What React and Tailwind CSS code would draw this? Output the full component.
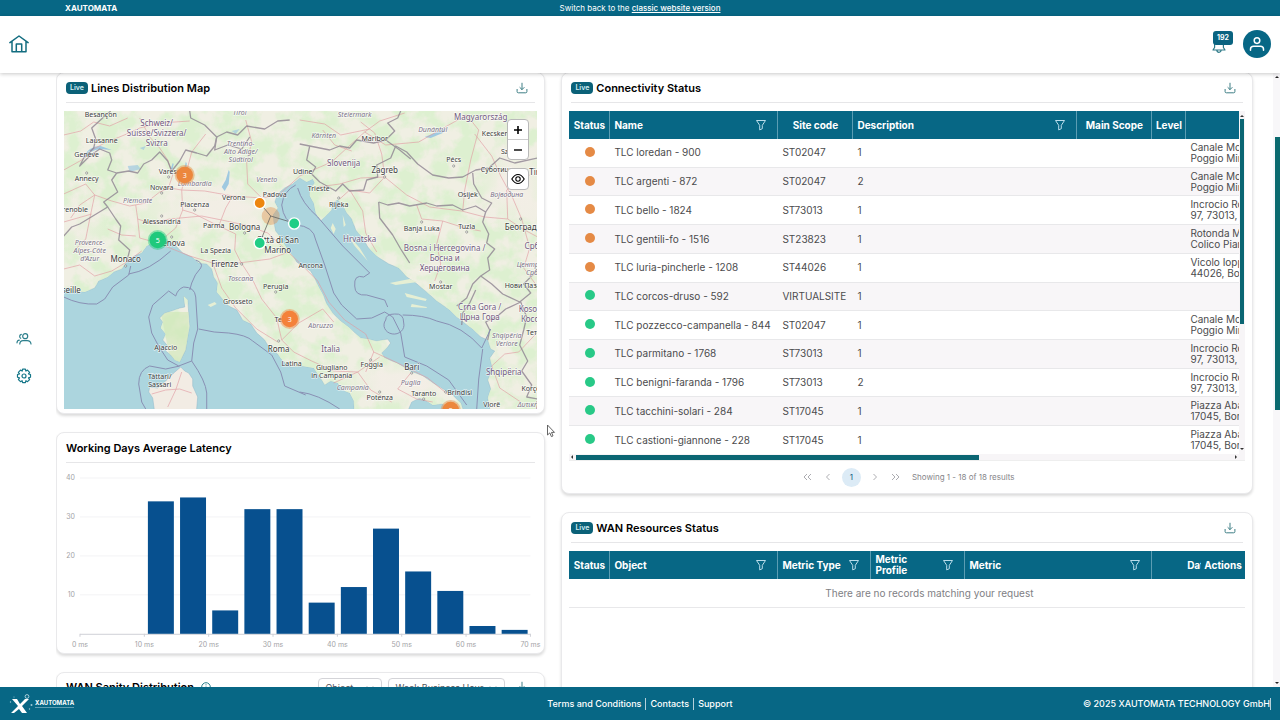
import React from "react";
import clsx from "clsx";

const ORANGE = "#e58a45";

const lines = [
  ["TLC loredan - 900", "ST02047", "1", "warn", "Canale Monti", "Poggio Mirteto"],
  ["TLC argenti - 872", "ST02047", "2", "warn", "Canale Monti", "Poggio Mirteto"],
  ["TLC bello - 1824", "ST73013", "1", "warn", "Incrocio Rocca", "97, 73013, Galatina"],
  ["TLC gentili-fo - 1516", "ST23823", "1", "warn", "Rotonda Mario", "Colico Piano"],
  ["TLC luria-pincherle - 1208", "ST44026", "1", "warn", "Vicolo Ioppi", "44026, Bosco"],
  ["TLC corcos-druso - 592", "VIRTUALSITE", "1", "ok", "", ""],
  ["TLC pozzecco-campanella - 844", "ST02047", "1", "ok", "Canale Monti", "Poggio Mirteto"],
  ["TLC parmitano - 1768", "ST73013", "1", "ok", "Incrocio Rocca", "97, 73013, Galatina"],
  ["TLC benigni-faranda - 1796", "ST73013", "2", "ok", "Incrocio Rocca", "97, 73013, Galatina"],
  ["TLC tacchini-solari - 284", "ST17045", "1", "ok", "Piazza Abate", "17045, Bormida"],
  ["TLC castioni-giannone - 228", "ST17045", "1", "ok", "Piazza Abate", "17045, Bormida"],
];

const latency = [34, 35, 6, 32, 32, 8, 12, 27, 16, 11, 2, 1];

function FilterIcon() {
  return (
    <svg viewBox="0 0 12 12" className="size-3 shrink-0" fill="none" stroke="#b9dcea" strokeWidth="1" strokeLinejoin="round">
      <path d="M1.5 1.5h9L7.3 6.3v3.4l-2.6 1.2V6.3z" />
    </svg>
  );
}

function DownloadIcon() {
  return (
    <svg viewBox="0 0 12 12" className="size-3" fill="none" stroke="#3f7f86" strokeWidth="1" strokeLinecap="round" strokeLinejoin="round">
      <path d="M6 1.2v6.3M3.9 5.5 6 7.6l2.1-2.1M1.1 7.4v2.2q0 1.2 1.2 1.2h7.4q1.2 0 1.2-1.2V7.4" />
    </svg>
  );
}

function Card({ title, live, download, extra, className, children }) {
  return (
    <section className={clsx("rounded-lg border border-[#e9e9eb] bg-white px-[7px] pb-1 shadow-[0_2px_3px_rgba(0,0,0,0.14)]", className)}>
      <header className="mx-0.5 flex h-[30px] items-center gap-[3px] border-b border-[#e6e6e8] pr-[7px]">
        {live && <span className="rounded bg-[#0b6178] px-1 text-[7px] leading-3 font-semibold text-[#d5eef3]">Live</span>}
        <h2 className="text-[11px] leading-4 font-semibold whitespace-nowrap text-black">{title}</h2>
        {extra}
        {download && (
          <button type="button" aria-label={"Download " + title} className={extra ? "ml-2" : "ml-auto"}>
            <DownloadIcon />
          </button>
        )}
      </header>
      {children}
    </section>
  );
}

const coast =
  "M40 289 64 289 69 288 75 291 85 292 95 288 99 281 108 277 114 272 122 269 127 262 135 256 142 253 147 246 157 241 166 239 175 245 183 253 192 257 199 263 207 264 212 269 214 277 218 283 217 292 222 298 229 306 237 310 243 320 251 324 257 333 265 340 269 347 278 354 283 361 291 367 302 366 314 368 320 377 325 385 331 381 338 383 345 391 350 393 354 401 355 420 408 420 409 409 412 402 420 398 427 401 433 405 443 404 450 411 464 411 461 403 452 394 445 390 433 383 423 376 412 372 397 363 385 358 382 353 388 347 391 343 388 339 377 341 368 339 361 338 350 328 341 321 333 313 327 304 324 296 319 287 315 278 311 271 303 266 297 262 293 256 289 251 284 243 280 236 276 231 274 222 273 215 278 208 275 202 278 194 285 188 293 184 300 178 307 182 313 179 315 183 310 189 310 196 314 203 316 213 321 221 327 215 332 210 333 203 338 200 343 205 347 213 352 219 356 230 363 238 368 247 378 257 389 264 399 268 407 277 416 283 428 293 437 301 450 310 457 317 466 324 473 329 481 337 488 340 491 349 495 351 490 358 493 369 488 380 491 389 488 398 492 420 560 420 560 90 40 90Z";
const corsica = "M184 296 188 300 189 312 190 326 188 337 186 350 180 362 175 360 171 355 166 351 168 346 163 340 166 334 161 328 163 322 160 318 165 313 172 311 180 308 185 307Z";
const sardinia = "M181 367 185 371 189 373 193 379 193 386 198 397 196 420 156 420 153 398 149 392 150 387 158 388 166 381 174 373Z";

const borders = [
  "M64 236 72 227 80 224 108 207 104 202 118 192 112 180 117 173 108 170 112 160 110 153 100 149 90 156 80 166 84 158 94 148 96 139 92 128 104 117 111 111",
  "M108 207 116 219 121 226 119 240 130 250 127 262",
  "M117 173 129 171 138 173 144 164 152 160 160 152 168 161 172 171 180 161 186 150 197 153 207 156 215 146 217 137 205 125 191 118 190 111",
  "M217 137 227 132 238 135 247 126 265 129 278 121 290 120",
  "M217 137 215 150 228 145 242 149 250 137",
  "M300 144 310 146 330 150 340 146 350 148 357 140 374 143 386 140 395 131 388 123 398 118 401 111",
  "M310 146 307 160 316 167 312 174 320 182 336 191 343 184 350 191 364 190 367 180 378 177 377 165 391 158 396 146 407 152 418 164 433 175 449 178 463 177 476 170 489 168 500 158 515 163 538 158",
  "M386 140 400 150 411 159",
  "M379 202 388 205 399 203 410 206 427 203 437 206 453 205 463 210 476 206 486 212 492 203 482 198 474 184 473 173",
  "M379 202 380 218 393 235 401 249 410 263",
  "M486 212 483 222 489 234 487 243 495 249 488 258 490 270 481 276 473 284 467 298 457 306",
  "M481 276 492 284 503 294 520 302 531 293 524 284 538 270",
  "M462 325 463 313 470 303 476 290",
  "M488 340 490 330 486 322 499 315 506 309 521 302",
  "M521 302 527 317 524 330 520 345 528 361 522 371 532 385 527 397 538 399",
];

const maritime = [
  "M64 297q16 8 33 7l8-5 8-12 16-12 2-9M129 274q20-3 42-23M196 260q8 3 5 8-6 6-9 15l-2 7",
  "M176 296q2-7 8-9 11 0 12 10l2 32-4 14-2 18-13 5-11-6q-10-14-16-27l-3-16 4-12 16-14z",
  "M199 329q16 4 30 4 18 2 24 8l19 14 9 17 4 14 21 9",
  "M192 361q14 20 15 32v16M180 366l-14 3-16-3q-11 4-11 18l3 18 4 7",
  "M296 185q-12 6-14 20 2 17 14 20 18 1 20 15l9 25 9 28 8 12 15 14 15-1 13-6 8 5 8 16 4 24 22 9 22 14 18 25",
  "M298 188q4 15 20 29l25 29 27 27-6 4q-10-3-9 9 0 10 12 9l18 5 3 7",
  "M386 320a10 9 0 1 0 18 3q0-10-9-9-9 0-9 6zM403 315q21 0 34 6 26 5 45 27l9-19M483 349q-5 30-6 60",
  "M300 392q18 2 40 17",
];

const roads = [
  "M64 170 82 160 92 150 105 143 127 134 140 128 160 123 190 121",
  "M64 194 86 184 95 195 91 214 86 239 75 250M95 195 112 201 130 206 146 203 160 192 170 188 182 190 205 191 233 196 262 198 279 195 300 176 318 168 332 162 345 150 365 132 380 121 405 113",
  "M136 205 138 219 150 223 170 219 202 216 222 220 245 225 268 233 282 246 300 263 318 281 329 302 345 320 366 334 374 352 398 363 428 378 449 395",
  "M182 190 183 210 193 213 219 226 236 234 235 250 241 262 254 282 262 299 277 318 282 340 294 352 312 361 334 371 358 372 380 357",
  "M138 219 140 238 158 243 176 228 183 210M158 243 190 256 213 263 239 263 270 259 289 252",
  "M213 263 222 288 236 308 257 329 278 342M282 340 299 323 323 309 334 322",
  "M168 190 173 175 168 160 160 148 150 137 140 118M182 190 187 171 192 152 206 134",
  "M262 198 248 184 247 163 252 142 246 120M219 226 226 208 233 196",
  "M64 135 81 131 94 122 110 126 128 118M95 195 80 205 71 218M64 269 80 265 95 276 112 271 127 262 142 251",
  "M318 187 340 184 361 178 385 177 407 195 430 207 462 211 485 217 508 219 523 229 538 237",
  "M385 177 382 154 375 133 361 122M385 177 370 193 350 190 340 199M350 190 363 211 366 233 377 252",
  "M417 205 422 219 443 221 465 228 481 231M365 132 386 145 419 142 440 130 467 115 479 130 471 160 465 190 463 211",
  "M522 219 513 198 501 176 492 156 475 134M522 219 530 248 524 268 538 287M443 221 437 244 441 264 435 281",
  "M492 366 505 354 519 352 538 332M492 366 500 388 521 402M508 219 507 190 530 175",
  "M334 383 358 372 371 390 392 402M411 373 398 389 417 399 433 402M374 352 366 372M152 394 166 390 180 389 192 393M182 372 176 390 168 407",
  "M300 120 325 124 341 135 370 129M323 130 335 145 352 151M92 214 64 222M108 229 122 235 136 236",
];

// text, x, y, size, kind (c city, k country, r region)
const labels = [
  ["Besançon", 101, 117, 7, "c"], ["Schweiz/", 157, 126, 8, "k"], ["Suisse/Svizzera/", 157, 136, 8, "k"], ["Svizra", 157, 146, 8, "k"],
  ["Lausanne", 102, 143, 7, "c"], ["Genève", 87, 157, 7, "c"], ["Annecy", 87, 181, 7, "c"], ["Grenoble", 73, 212, 7, "c"],
  ["Trentino-", 241, 146, 7, "r"], ["Alto Adige/", 241, 154, 7, "r"], ["Südtirol", 241, 162, 7, "r"], ["Tirol", 240, 115, 7, "r"],
  ["Varese", 170, 174, 7, "c"], ["Lombardia", 195, 186, 7, "r"], ["Novara", 162, 190, 7, "c"], ["Veneto", 267, 182, 7, "r"],
  ["Udine", 303, 174, 7, "c"], ["Padova", 275, 197, 7, "c"], ["Verona", 234, 200, 7, "c"], ["Piemonte", 138, 203, 7, "r"],
  ["Piacenza", 195, 207, 7, "c"], ["Alessandria", 162, 224, 7, "c"], ["Parma", 214, 228, 7, "c"], ["Bologna", 245, 230, 8, "c"],
  ["Provence-", 90, 245, 7, "r"], ["Alpes-Côte", 90, 253, 7, "r"], ["d'Azur", 90, 261, 7, "r"], ["Genova", 171, 246, 8, "c"],
  ["Città di San", 278, 243, 8, "c"], ["Marino", 278, 253, 8, "c"], ["La Spezia", 216, 253, 7, "c"], ["Monaco", 126, 262, 8, "c"],
  ["Firenze", 225, 267, 8, "c"], ["Toscana", 241, 281, 7, "r"], ["Perugia", 276, 289, 7, "c"], ["Marseille", 64, 293, 8, "c"],
  ["Grosseto", 238, 304, 7, "c"], ["Ancona", 311, 268, 7, "c"], ["Terni", 283, 322, 7, "c"], ["Abruzzo", 321, 328, 7, "r"],
  ["Ajaccio", 166, 350, 7, "c"], ["Roma", 279, 352, 8, "c"], ["Italia", 331, 352, 8, "k"], ["Latina", 292, 366, 7, "c"],
  ["Tàttari/", 160, 379, 7, "c"], ["Sassari", 160, 387, 7, "c"], ["Giugliano", 332, 370, 7, "c"], ["in Campania", 332, 378, 7, "c"],
  ["Foggia", 372, 367, 7, "c"], ["Bari", 412, 370, 8, "c"], ["Campania", 353, 390, 7, "r"], ["Puglia", 411, 385, 7, "r"],
  ["Potenza", 380, 400, 7, "c"], ["Taranto", 424, 396, 7, "c"], ["Brindisi", 460, 395, 7, "c"], ["Steiermark", 355, 117, 7, "r"],
  ["Kärnten", 324, 138, 7, "r"], ["Maribor", 375, 141, 7, "c"], ["Magyarország", 481, 120, 8, "k"], ["Dunántúl", 433, 132, 7, "r"],
  ["Kecskemét", 500, 136, 7, "c"], ["Szeged", 513, 154, 7, "c"], ["Pécs", 454, 162, 7, "c"], ["Slovenija", 344, 166, 8, "k"],
  ["Zagreb", 385, 173, 8, "c"], ["Суботица", 497, 172, 7, "c"], ["Timișoara", 548, 175, 8, "c"], ["Trieste", 319, 191, 7, "c"],
  ["Rijeka", 339, 207, 7, "c"], ["Osijek", 468, 197, 7, "c"], ["Војводина", 507, 197, 7, "r"], ["Banja Luka", 422, 231, 7, "c"],
  ["Tuzla", 467, 229, 7, "c"], ["Београд", 521, 230, 8, "c"], ["Hrvatska", 360, 242, 8, "k"], ["Bosna i Hercegovina /", 445, 251, 8, "k"],
  ["Босна и", 445, 261, 8, "k"], ["Херцеговина", 445, 271, 8, "k"], ["Србија", 538, 249, 8, "k"], ["Централна", 536, 267, 7, "r"],
  ["Србија", 537, 275, 7, "r"], ["Mostar", 441, 289, 7, "c"], ["Нови Пазар", 525, 288, 7, "c"], ["Crna Gora /", 480, 310, 8, "k"],
  ["Црна Гора", 480, 320, 8, "k"], ["Kosova /", 535, 312, 8, "k"], ["Косово", 535, 322, 8, "k"], ["Shqipëria", 507, 338, 7, "r"],
  ["Veriore", 507, 346, 7, "r"], ["Тетово", 538, 335, 7, "c"], ["Shqipëria", 504, 375, 8, "k"], ["Korçë", 531, 391, 7, "c"],
  ["Vlorë", 492, 407, 7, "c"], ["Δυτική", 528, 407, 7, "r"],
];

const labelStyle = { c: "fill-[#3d3d3d]", k: "fill-[#71597f]", r: "fill-[#7d7489] italic" };

function Marker({ x, y, n, color }) {
  return (
    <g>
      <circle cx={x} cy={y} r="10" fill={color} opacity="0.45" />
      <circle cx={x} cy={y} r="8.3" fill={color} />
      <text x={x} y={y + 3} textAnchor="middle" fill="#fff" fontSize="7">{n}</text>
    </g>
  );
}

function LinesMap() {
  return (
    <div className="relative mt-2">
      <svg viewBox="64 111 474 298" preserveAspectRatio="xMidYMid slice" className="block h-[298px] w-full bg-[#acd5de] font-['Noto_Sans',sans-serif]" role="img" aria-label="Lines distribution map">
        <defs>
          <clipPath id="land">
            <path d={coast} />
            <path d={corsica} />
          </clipPath>
          <filter id="woods" x="0" y="0" width="1" height="1">
            <feTurbulence type="fractalNoise" baseFrequency="0.05" numOctaves="5" seed="8" />
            <feColorMatrix values="0 0 0 0 0.72  0 0 0 0 0.87  0 0 0 0 0.63  4 0 0 0 -1.5" />
          </filter>
          <radialGradient id="plain">
            <stop offset="0.3" stopColor="#f3eee6" stopOpacity="0.95" />
            <stop offset="1" stopColor="#f3eee6" stopOpacity="0" />
          </radialGradient>
        </defs>
        <g fill="#f0efe3" stroke="#8fb9cb" strokeWidth="0.5">
          <path d={coast} />
          <path d={corsica} />
          <path d={sardinia} fill="#f2ece4" />
        </g>
        <g clipPath="url(#land)">
          <rect x="64" y="111" width="474" height="298" filter="url(#woods)" />
          <ellipse cx="215" cy="209" rx="95" ry="25" fill="url(#plain)" />
          <ellipse cx="515" cy="186" rx="42" ry="48" fill="url(#plain)" />
          <ellipse cx="400" cy="382" rx="70" ry="25" fill="url(#plain)" />
          <ellipse cx="82" cy="225" rx="28" ry="40" fill="url(#plain)" opacity="0.5" />
          <path d="M161 312h28v50h-18z" fill="#cfe6b6" opacity="0.6" />
        </g>
        <g fill="#9fc9e0">
          <path d="M83 157q8-12 18-11l11 4-12-1q-9 1-15 9zM222 187l4-7 3-10 1 2-1 12-4 7zM184 172l2-10 1 1 0 9zM425 137l15-6 8-4-5 6-12 5zM170 172l3-9 1 1-2 9z" />
          <path d="M128 166l10-1 3 4-11 3zM232 131l8-2-4 5zM140 148l6-2-2 4z" opacity="0.7" />
        </g>
        <g fill="#e6efd4">
          <path d="M208 305l7-3 2 2-6 3zM333 223l3 6-2 5-3-6zM343 215l3 10-2 2zM346 232l14 16 8 13-13-15zM390 283l20-4 8 3-22 3zM405 293l22 6-1 2-19-4zM412 304l15 3v1l-16-1z" />
        </g>
        <g fill="none" stroke="#e0979f" strokeWidth="0.75" strokeLinejoin="round" opacity="0.8">
          {roads.map((d) => <path key={d} d={d} />)}
        </g>
        <g fill="none" stroke="#8f8492" strokeWidth="1.3" strokeLinejoin="round" opacity="0.8">
          {borders.map((d) => <path key={d} d={d} />)}
        </g>
        <g fill="none" stroke="#8990b4" strokeWidth="1" strokeLinejoin="round">
          {maritime.map((d) => <path key={d} d={d} />)}
        </g>
        <g fill="#fff" stroke="#555" strokeWidth="0.5">
          {[[87, 173], [169, 177], [162, 193], [195, 210], [162, 216], [172, 237], [245, 233], [242, 264], [339, 198], [385, 177], [454, 166], [422, 222], [467, 232], [521, 219], [441, 282], [412, 373], [371, 360], [380, 392], [424, 399], [446, 392], [279, 341], [276, 292], [126, 266]].map(([x, y]) => (
            <circle key={x + "-" + y} cx={x} cy={y} r="1.1" />
          ))}
        </g>
        <g textAnchor="middle" stroke="#fff" strokeOpacity="0.65" strokeWidth="1.4" strokeLinejoin="round" paintOrder="stroke">
          {labels.map(([t, x, y, s, k]) => (
            <text key={t + x + y} x={x} y={y} fontSize={s} className={labelStyle[k]}>{t}</text>
          ))}
        </g>
        <circle cx="271" cy="216" r="9" fill={ORANGE} opacity="0.38" />
        <path d="M260 203 271 216 294 223M271 216 260 243" fill="none" stroke="#555" strokeWidth="0.7" />
        <g stroke="#fff" strokeWidth="1.4">
          <circle cx="260" cy="203" r="5.6" fill="#ed860f" />
          <circle cx="294.5" cy="223.5" r="5.6" fill="#1fce85" />
          <circle cx="260" cy="243" r="5.6" fill="#1fce85" />
        </g>
        <Marker x={185} y={175} n="3" color="#ec873d" />
        <Marker x={158} y={240} n="5" color="#1fc97c" />
        <Marker x={290} y={319} n="3" color="#f4813a" />
        <Marker x={451} y={410} n="2" color="#ec873d" />
      </svg>
      <div className="absolute top-2 right-2 flex flex-col rounded-sm border border-[#b9b9b9] bg-white text-black">
        <button type="button" aria-label="Zoom in" className="flex size-5 items-center justify-center border-b border-[#ccc]">
          <svg viewBox="0 0 10 10" className="size-2.5" stroke="currentColor" strokeWidth="1.6"><path d="M5 1v8M1 5h8" /></svg>
        </button>
        <button type="button" aria-label="Zoom out" className="flex h-[19px] w-5 items-center justify-center">
          <svg viewBox="0 0 10 10" className="size-2.5" stroke="currentColor" strokeWidth="1.4"><path d="M1 5h8" /></svg>
        </button>
      </div>
      <button type="button" aria-label="Toggle layers" className="absolute top-[57px] right-2 flex size-[22px] items-center justify-center rounded-sm border border-[#b9b9b9] bg-white">
        <svg viewBox="0 0 14 12" className="h-3 w-3.5" fill="none" stroke="#000" strokeWidth="1.1">
          <path d="M.8 6Q3.5 1.5 7 1.5T13.2 6Q10.5 10.5 7 10.5T.8 6z" />
          <circle cx="7" cy="6" r="2.2" />
        </svg>
      </button>
    </div>
  );
}

function LatencyChart() {
  return (
    <svg viewBox="64 463 474 186" className="block w-full overflow-visible font-['Inter',sans-serif]" role="img" aria-label="Working days average latency histogram">
      {[10, 20, 30, 40].map((v) => (
        <g key={v}>
          <path d={`M80 ${634 - v * 3.9}H531`} stroke="#f3f3f5" strokeWidth="1" />
          <text x="75" y={636.5 - v * 3.9} textAnchor="end" fontSize="7" fill="#a3a3a6">{v}</text>
        </g>
      ))}
      <path d="M80 634.5H531" stroke="#cfd0d6" strokeWidth="1" />
      {latency.map((v, i) => (
        <rect key={i} x={148 + i * 32.2} y={634 - v * 3.9} width="26" height={v * 3.9} fill="#07508f" />
      ))}
      {[0, 1, 2, 3, 4, 5, 6, 7].map((i) => (
        <g key={i}>
          <path d={`M${80 + i * 64.43} 634v3`} stroke="#cfd0d6" strokeWidth="1" />
          <text x={80 + i * 64.43} y="647" textAnchor="middle" fontSize="7" fill="#a3a3a6">{i === 0 ? "0 ms" : i + "0 ms"}</text>
        </g>
      ))}
    </svg>
  );
}

function Th({ children, filter, center, narrow, className }) {
  return (
    <th scope="col" className={clsx("border-r border-[#5b9db3] bg-[#076785] p-0 text-[10px] leading-[11px] font-bold text-white", className)}>
      <div className={clsx("flex items-center px-1", center ? "justify-center" : "justify-between")}>
        <span className={clsx(narrow && "w-10")}>{children}</span>
        {filter && (
          <button type="button" aria-label={"Filter " + children} className="mr-1.5">
            <FilterIcon />
          </button>
        )}
      </div>
    </th>
  );
}

function ConnectivityTable() {
  return (
    <div className="mt-2">
      <div className="flex h-[343px]">
        <div className="min-w-0 flex-1 overflow-hidden">
          <table className="h-[344px] w-[770px] table-fixed border-separate border-spacing-0 text-left text-[10px] leading-[11px] text-[#4b4b4d]">
            <colgroup>
              <col className="w-[41px]" /><col className="w-[168px]" /><col className="w-[75px]" /><col className="w-[224px]" /><col className="w-[75px]" /><col className="w-[34px]" /><col />
            </colgroup>
            <thead>
              <tr className="h-7">
                <Th center>Status</Th><Th filter>Name</Th><Th center>Site code</Th><Th filter>Description</Th><Th center>Main Scope</Th><Th center>Level</Th><Th center>Address</Th>
              </tr>
            </thead>
            <tbody>
              {lines.map(([name, site, desc, state, a1, a2], i) => (
                <tr key={name} className={clsx("h-7", i % 2 ? "bg-[#f8f6f8]" : "bg-white")}>
                  <td className="border-b border-[#e8e8ea] p-0">
                    <span role="img" aria-label={state} className={clsx("mx-auto mb-0.5 block size-2.5 rounded-full", state === "ok" ? "bg-[#28c987]" : "bg-[#e58a45]")} />
                  </td>
                  <td className="border-b border-[#e8e8ea] px-1 py-0 whitespace-nowrap">{name}</td>
                  <td className="border-b border-[#e8e8ea] px-1 py-0">{site}</td>
                  <td className="border-b border-[#e8e8ea] px-1 py-0">{desc}</td>
                  <td className="border-b border-[#e8e8ea] p-0" />
                  <td className="border-b border-[#e8e8ea] p-0" />
                  <td className="border-b border-[#e8e8ea] px-1 py-0 whitespace-nowrap">{a1}{a1 && <br />}{a2}</td>
                </tr>
              ))}
            </tbody>
          </table>
        </div>
        <div className="flex w-1.5 flex-col items-center justify-between bg-[#f7f5f7] pt-1">
          <div className="flex w-full flex-col items-center gap-0.5">
            <i className="border-x-2 border-b-2 border-x-transparent border-b-[#333]" />
            <i className="h-[205px] w-1 bg-[#0b6673]" />
          </div>
          <i className="mb-1 border-x-2 border-t-2 border-x-transparent border-t-[#333]" />
        </div>
      </div>
      <div className="flex h-[7px] items-center border-b border-[#eee] bg-[#f7f5f7] px-0.5">
        <i className="mr-[3px] border-y-2 border-r-2 border-y-transparent border-r-[#333]" />
        <i className="h-[5px] w-3/5 bg-[#0b6673]" />
        <i className="mr-1.5 ml-auto border-y-2 border-l-2 border-y-transparent border-l-[#333]" />
      </div>
      <nav aria-label="Pagination" className="flex h-[28px] items-center justify-center gap-[7px] pt-1 text-[8px] text-[#86868a]">
        <PageButton label="First page" d="M5 2 2 5l3 3M9 2 6 5l3 3" />
        <PageButton label="Previous page" d="M6.5 2l-3 3 3 3" />
        <button type="button" aria-current="page" className="flex size-[19px] items-center justify-center rounded-full bg-[#dcebf6] text-[#0d5c80]">1</button>
        <PageButton label="Next page" d="M3.5 2l3 3-3 3" />
        <PageButton label="Last page" d="M1 2l3 3-3 3M5 2l3 3-3 3" />
        <span className="pl-0.5">Showing 1 - 18 of 18 results</span>
      </nav>
    </div>
  );
}

function PageButton({ label, d }) {
  return (
    <button type="button" aria-label={label} className="flex w-3.5 justify-center">
      <svg viewBox="0 0 10 10" className="size-2.5" fill="none" stroke="#a3a3a8" strokeWidth="0.9"><path d={d} /></svg>
    </button>
  );
}

function WanTable() {
  return (
    <div className="mt-2 overflow-hidden">
      <table className="w-[720px] table-fixed border-separate border-spacing-0 text-left">
        <colgroup>
          <col className="w-[41px]" /><col className="w-[168px]" /><col className="w-[93px]" /><col className="w-[94px]" /><col className="w-[187px]" /><col className="w-[93px]" /><col className="w-[44px]" />
        </colgroup>
        <thead>
          <tr className="h-7">
            <Th center>Status</Th><Th filter>Object</Th><Th filter>Metric Type</Th><Th filter narrow>Metric Profile</Th><Th filter>Metric</Th><Th center>Date</Th><Th center className="sticky right-0 border-r-0">Actions</Th>
          </tr>
        </thead>
        <tbody>
          <tr className="h-[29px]">
            <td colSpan={7} className="border-b border-[#e8e8ea] p-0 text-center text-[10px] text-[#808084]">There are no records matching your request</td>
          </tr>
        </tbody>
      </table>
    </div>
  );
}

function FilterSelect({ label, text, className }) {
  return (
    <span className={clsx("relative", className)}>
      <select aria-label={label} className="block h-[19px] w-full appearance-none rounded-sm border border-[#d4d4d8] bg-white px-1.5 text-[9px] text-[#55555a]">
        <option>{text}</option>
      </select>
      <svg viewBox="0 0 8 6" className="pointer-events-none absolute top-[7px] right-2 h-1.5 w-2" fill="none" stroke="#77777c" strokeWidth="0.9"><path d="M1 1.5l3 3 3-3" /></svg>
    </span>
  );
}

export default function App() {
  return (
    <div className="relative flex h-screen flex-col overflow-hidden bg-white font-['Inter','Noto_Sans',sans-serif]">
      <div className="grid h-4 shrink-0 grid-cols-3 items-center bg-[#076785] text-[8px] leading-4 text-white">
        <span className="pl-[65px] font-bold">XAUTOMATA</span>
        <span className="text-center whitespace-nowrap">Switch back to the <a href="#classic" className="font-medium underline">classic website version</a></span>
      </div>

      <header className="z-10 flex h-[57px] shrink-0 items-center justify-between bg-white pr-[9px] pb-0.5 pl-[9px] shadow-[0_1px_4px_rgba(0,0,0,0.22)]">
        <a href="#home" aria-label="Home">
          <svg viewBox="0 0 20 18" className="h-[18px] w-5" fill="none" stroke="#136d80" strokeWidth="1.5" strokeLinejoin="round" strokeLinecap="round">
            <path d="M.9 7.6 10 1l9.1 6.6M3 6.5V16.8h14V6.5M7.3 16.5V9h5.4v7.5" />
          </svg>
        </a>
        <div className="flex items-center gap-2.5">
          <button type="button" aria-label="192 notifications" className="relative mt-1 mr-[7px] h-4 w-3.5">
            <svg viewBox="0 0 14 16" className="h-4 w-3.5" fill="none" stroke="#2d7a88" strokeWidth="1.2" strokeLinejoin="round">
              <path d="M1 12h12l-1.6-2.5V6a4.4 4.4 0 0 0-8.8 0v3.5zM4.8 12.2q.3 2.2 2.2 2.2t2.2-2.2" />
            </svg>
            <span className="absolute -top-[7px] left-px rounded-[3px] bg-[#0a6380] px-1 text-[7px] leading-[14px] font-bold text-white">192</span>
          </button>
          <button type="button" aria-label="Account" className="flex size-7 items-center justify-center rounded-full bg-[#076785]">
            <svg viewBox="0 0 16 16" className="size-4" fill="none" stroke="#fff" strokeWidth="1.5" strokeLinecap="round">
              <circle cx="8" cy="4.6" r="2.8" />
              <path d="M1.5 14.3V13q0-2.8 3.2-2.8h6.6q3.2 0 3.2 2.8v1.3" />
            </svg>
          </button>
        </div>
      </header>

      <div className="flex min-h-0 flex-1">
        <aside className="flex w-14 shrink-0 flex-col items-center justify-center gap-[21px] pr-2 pb-[46px]">
          <a href="#users" aria-label="Users">
            <svg viewBox="0 0 16 16" className="size-4" fill="none" stroke="#2c7f8c" strokeWidth="1.2" strokeLinecap="round">
              <circle cx="9.2" cy="5.2" r="2.5" />
              <path d="M5.3 3.3a2.2 2.2 0 0 0-.6 4M3.8 13q.2-3.4 3.2-3.4h4.2Q14.6 9.6 15 13M1 11.8Q1.1 9.4 3.3 9.2" />
            </svg>
          </a>
          <a href="#settings" aria-label="Settings">
            <svg viewBox="0 0 16 16" className="size-4" fill="none" stroke="#147688" strokeWidth="1.2" strokeLinejoin="round">
              <path d="M6.6 1.2h2.8l.5 1.9 1.6-1 2.1 2.2-1.1 1.6 2 .6v2.8l-2 .6 1.1 1.700-2.100 2.100-1.600-1-.5 1.900H6.600l-.5-1.900-1.600 1-2.100-2.100 1.100-1.700-2-.6V6.500l2-.6-1.100-1.600 2.100-2.200 1.600 1z" />
              <circle cx="8" cy="8" r="2" />
            </svg>
          </a>
        </aside>

        <main className="min-w-0 flex-1 overflow-hidden pr-5">
          <div className="-mt-px grid grid-cols-12 items-start gap-4">
            <div className="col-span-5 flex flex-col gap-[18px]">
              <Card title="Lines Distribution Map" live download><LinesMap /></Card>
              <Card title="Working Days Average Latency"><LatencyChart /></Card>
              <Card
                title="WAN Sanity Distribution"
                download
                className="min-h-60"
                extra={
                  <>
                    <svg viewBox="0 0 10 10" className="ml-1 size-2.5" fill="none" stroke="#2c7f8c" strokeWidth="1"><circle cx="5" cy="5" r="4.3" /><path d="M5 4.5V8M5 2.3v1" /></svg>
                    <span className="ml-auto flex gap-1.5">
                      <FilterSelect label="Metric source" text="Object" className="w-16" />
                      <FilterSelect label="Time range" text="Week Business Hour" className="w-[117px]" />
                    </span>
                  </>
                }
              />
            </div>
            <div className="col-span-7 flex flex-col gap-[18px]">
              <Card title="Connectivity Status" live download><ConnectivityTable /></Card>
              <Card title="WAN Resources Status" live download className="min-h-96"><WanTable /></Card>
            </div>
          </div>
        </main>

        <div className="flex w-[7px] shrink-0 flex-col items-center justify-between bg-[#f8f7f9] py-[3px]">
          <i className="border-x-2 border-b-2 border-x-transparent border-b-[#222]" />
          <div className="flex w-full flex-1 flex-col items-end pt-[59px]">
            <i className="h-1/2 w-[5px] bg-[#0b6a6f]" />
          </div>
          <i className="border-x-2 border-t-2 border-x-transparent border-t-[#222]" />
        </div>
      </div>

      <footer className="z-10 grid h-[33px] shrink-0 grid-cols-3 items-center bg-[#076785] pr-[9px] pl-[9px] text-[9px] font-medium text-white">
        <div className="flex items-center">
          <svg viewBox="0 0 24 22" className="h-[22px] w-6" fill="none">
            <path d="M3 6h5l3 5 5-5h4l-7 7 5 7h-5l-3-4-5 4H2l7-7z" fill="#fff" />
            <circle cx="18" cy="3.5" r="1.9" stroke="#c9e2ea" strokeWidth="0.8" />
            <circle cx="22.5" cy="12" r="1" fill="#9fc8d6" /><circle cx="1.5" cy="9" r="0.7" fill="#9fc8d6" /><circle cx="5" cy="4" r="0.6" fill="#9fc8d6" /><circle cx="20.5" cy="16" r="0.7" fill="#9fc8d6" />
          </svg>
          <div className="ml-0.5 flex flex-col gap-px">
            <span className="text-[6px] leading-[7px] font-bold">XAUTOMATA</span>
            <i className="h-px w-full bg-[#5c9db3]" />
          </div>
        </div>
        <nav className="flex items-center justify-center whitespace-nowrap">
          <a href="#terms" className="pr-1">Terms and Conditions</a>
          <a href="#contacts" className="border-l border-white/70 px-1 leading-3">Contacts</a>
          <a href="#support" className="border-l border-white/70 pl-1 leading-3">Support</a>
        </nav>
        <span className="justify-self-end border-r border-white/70 leading-3 whitespace-nowrap">© 2025 XAUTOMATA TECHNOLOGY GmbH</span>
      </footer>

      <svg viewBox="0 0 10 14" className="absolute top-[424px] left-[546px] z-20 h-3.5 w-2.5" fill="#fff" stroke="#555" strokeWidth="0.9" aria-hidden="true">
        <path d="M1.5 1v10l2.3-2.1L5.4 12.6l1.6-.7-1.5-3.5h3z" />
      </svg>
    </div>
  );
}
